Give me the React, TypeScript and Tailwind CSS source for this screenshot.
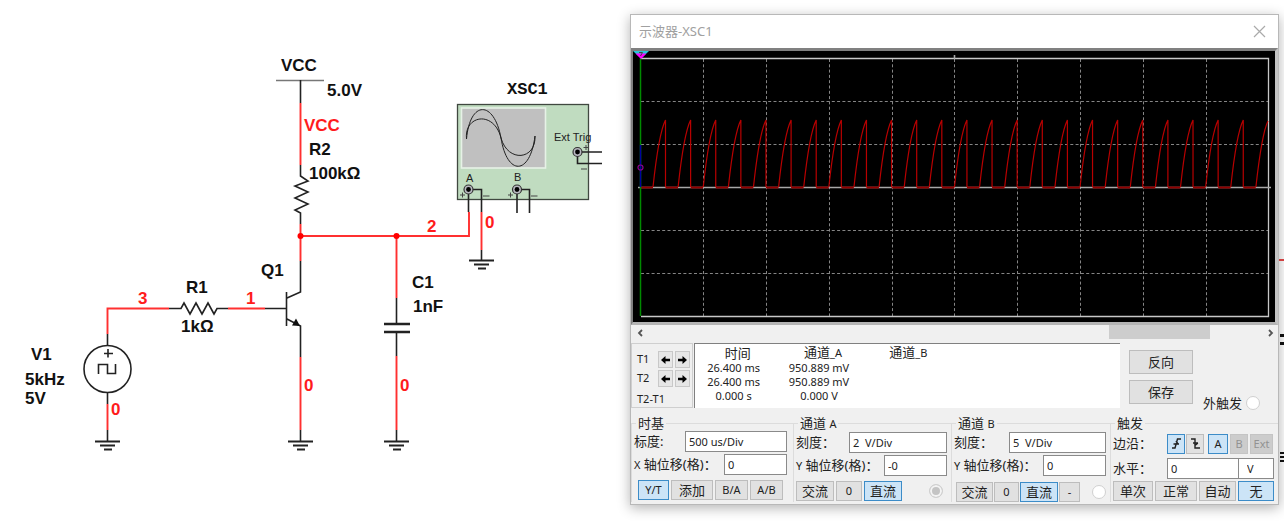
import type { InputHTMLAttributes, ReactNode } from "react";
import clsx from "clsx";

const PULSE_COUNT = 24;
const PULSE_STEP = 25.12;

const readings = [
  { time: "26.400 ms", a: "950.889 mV" },
  { time: "26.400 ms", a: "950.889 mV" },
  { time: "0.000 s", a: "0.000 V" },
];

export default function App() {
  return (
    <main className="grid min-h-screen grid-cols-[630fr_649fr_5px] items-start bg-white">
      <Circuit />
      <Oscilloscope />
      <EdgeMarks />
    </main>
  );
}

function Ground({ x, y }: { x: number; y: number }) {
  return (
    <path
      d={`M${x - 12} ${y}h25M${x - 7} ${y + 4}h15M${x - 3} ${y + 8}h8`}
      stroke="#222"
      strokeWidth="1.8"
    />
  );
}

function Terminal({ x, y }: { x: number; y: number }) {
  return (
    <g>
      <circle cx={x} cy={y} r="4.5" fill="#b8b8c0" stroke="#333" strokeWidth="1.2" />
      <circle cx={x} cy={y} r="2.4" fill="#000" />
    </g>
  );
}

function Circuit() {
  return (
    <svg
      viewBox="0 0 630 521"
      className="h-auto w-full font-['Liberation_Sans',Arial,sans-serif]"
      fill="none"
      role="img"
      aria-label="Circuit"
    >
      {/* wires */}
      <g stroke="#ff3030" strokeWidth="1.9">
        <path d="M107.5 334V308.5H169M228 308.5H265" />
        <path d="M107.5 404V430M300.5 357V430M396.5 356V430" />
        <path d="M300.5 103V165M300.5 224V261M300.5 236H469V212" />
        <path d="M396.5 236V298M481.5 212V250" />
      </g>
      <circle cx="300.5" cy="236" r="3" fill="#f00" />
      <circle cx="396.5" cy="236" r="3" fill="#f00" />

      {/* scope block */}
      <rect x="457.5" y="104.5" width="131" height="95" fill="#c0dcc0" stroke="#404840" strokeWidth="1.3" />
      <rect x="461.5" y="108" width="84" height="60" fill="#c0c0c0" stroke="#e6f2e6" strokeWidth="1.6" />
      <g stroke="#222" strokeWidth="1">
        <path d="M466.5 139C470 100 494 100 501 138C507 176 530 176 535 136" />
        <path d="M466.5 139C464 115 494 110 501 138C508 163 536 160 535 136" />
      </g>

      {/* leads and components */}
      <g stroke="#222" strokeWidth="1.6">
        <path d="M276 80.5H324" stroke="#777" />
        <path d="M300.5 80V103M300.5 165V176L308 181L295 186L308 192L295 198L308 204L295 210L300.5 213V224" />
        <path d="M169 308.5H181L184 303L190 314L196 303L202 314L208 303L214 314L217 308.5H228" />
        <path d="M265 308.5H286M286.5 292V326M287 298L300.5 292V261M287 319L300.5 326V357" />
        <path d="M107.5 334V345M107.5 393V404M107.5 430V441M300.5 430V441M396.5 430V441" />
        <circle cx="107.5" cy="369" r="23.5" />
        <path d="M104 353.5H113M108 349V357.5M98.5 374V364.500H107.500V373.500H115.500V364" />
        <path d="M396.5 298V324M396.5 332V356" />
        <path d="M384 324H410M384 332H410" strokeWidth="2.4" />
        <path d="M468.500 190V212M472 189.500H481.500V212M481.500 250V260" />
        <path d="M517 190V213M520 189.500H529.500V213M577 152H602M577.500 152V163.500H602" />
      </g>
      <path d="M300 326L292 325.500L296 318.500Z" fill="#111" />
      <g stroke="#444" strokeWidth="1">
        <path d="M460 195H465M462.500 192.500V197.500M508 195H513M510.500 192.500V197.500M583.500 147.500H588.500M586 145V150" />
        <path d="M483 196H489.500M531 196H537.500M581 169H587" />
      </g>
      <Terminal x={468.5} y={189.5} />
      <Terminal x={517} y={189.5} />
      <Terminal x={577.5} y={152} />

      <Ground x={107} y={441.5} />
      <Ground x={300} y={441.5} />
      <Ground x={396} y={441.5} />
      <Ground x={481} y={260.5} />

      <g fill="#111" className="text-[17px] font-bold">
        <text x="281" y="71">VCC</text>
        <text x="327" y="96">5.0V</text>
        <text x="309" y="155">R2</text>
        <text x="309" y="179">100kΩ</text>
        <text x="261" y="276">Q1</text>
        <text x="186" y="293">R1</text>
        <text x="181" y="332">1kΩ</text>
        <text x="31" y="360">V1</text>
        <text x="25" y="385">5kHz</text>
        <text x="25" y="404">5V</text>
        <text x="412" y="288">C1</text>
        <text x="413" y="312">1nF</text>
      </g>
      <g fill="#ff1c1c" className="text-[17px] font-bold">
        <text x="304" y="131">VCC</text>
        <text x="427" y="232">2</text>
        <text x="485" y="228">0</text>
        <text x="138" y="304">3</text>
        <text x="246" y="304">1</text>
        <text x="111" y="415">0</text>
        <text x="304" y="391">0</text>
        <text x="400" y="391">0</text>
      </g>
      <text x="507" y="94" fill="#111" className="font-['Liberation_Mono','Courier_New',monospace] text-[17px] font-bold">
        XSC1
      </text>
      <g fill="#222" className="text-[11px]">
        <text x="466" y="182">A</text>
        <text x="514" y="181">B</text>
        <text x="554" y="141">Ext Trig</text>
      </g>
    </svg>
  );
}

function Oscilloscope() {
  return (
    <section
      aria-label="示波器-XSC1"
      className="mt-3.5 min-w-0 border border-[#b8b8b8] bg-[#f0f0f0] font-['Noto_Sans','Noto_Sans_CJK_SC',sans-serif] text-[13px] text-[#222] shadow-[0_3px_12px_rgba(0,0,0,0.3)]"
    >
      <header className="flex h-[33px] items-center justify-between bg-white pr-3 pl-2">
        <h1 className="text-[13px] text-[#a0a0a0]">示波器-XSC1</h1>
        <button type="button" aria-label="关闭">
          <svg width="13" height="13" viewBox="0 0 13 13" stroke="#aaa" strokeWidth="1.2">
            <path d="M1 1L12 12M12 1L1 12" />
          </svg>
        </button>
      </header>
      <Screen />
      <ScrollBar />
      <Readout />
      <Controls />
    </section>
  );
}

function Screen() {
  const starts = Array.from({ length: PULSE_COUNT }, (_, i) => 20 + i * PULSE_STEP);
  const pulses = starts.map((x) => `M${x} 136C${x + 3} 108 ${x + 8} 78 ${x + 12.5} 69V136`).join("");
  const rests = starts.map((x) => `M${x + 12.5} 136.500h12.500`).join("");

  return (
    <div className="border-t-[3px] border-r-[3px] border-b-[3px] border-l-2 border-t-[#808080] border-r-[#c4c4c4] border-b-[#b4b4b4] border-l-[#808080] bg-black">
      <svg viewBox="0 0 642 271" className="block h-auto w-full" fill="none" role="img" aria-label="通道_A">
        <g stroke="#858585" strokeDasharray="3 2.300">
          {[50.5, 93.5, 179.5, 222.5].map((y) => (
            <path key={y} d={`M8 ${y}H635`} />
          ))}
          {[70.5, 133.5, 196.5, 259.5, 321.5, 384.5, 447.5, 510.5, 573.5].map((x) => (
            <path key={x} d={`M${x} 8V265`} />
          ))}
        </g>
        <path d="M8 7.500H635.500V265.500H8" stroke="#c8c8c8" strokeWidth="1.3" />
        <path d="M5 136.500H638M321.500 4V8" stroke="#a8a8a8" strokeWidth="1.6" />
        <path d="M7.500 136.500H20" stroke="#900000" strokeWidth="2" />
        <path d={rests} stroke="#900000" strokeWidth="2" />
        <path d={pulses} stroke="#b80000" strokeWidth="1.2" />
        <path d="M622.900 136C626 108 631 78 635 70" stroke="#b80000" strokeWidth="1.2" />
        <path d="M7.500 7V265" stroke="#008a00" strokeWidth="1.5" />
        <path d="M7.500 94V136" stroke="#0000a0" strokeWidth="1.5" />
        <circle cx="7.5" cy="116.500" r="2.500" stroke="#900090" strokeWidth="1.2" />
        <path d="M0 0H16L8 7.500Z" fill="#28c8d8" />
        <path d="M2.500 2.500H13.500L8 8Z" fill="#f0f" />
        <path d="M6 1.500H9.500L7.500 5" stroke="#444" />
      </svg>
    </div>
  );
}

function ScrollBar() {
  return (
    <div className="flex h-4 items-center justify-between pr-1 pl-1.5">
      <button type="button" aria-label="向左">
        <Chevron d="M5 1L2 4L5 7" />
      </button>
      <div className="grid h-full grow grid-cols-[463fr_100fr_57fr]">
        <div className="col-start-2 mb-0.5 bg-[#cdcdcd]" />
      </div>
      <button type="button" aria-label="向右">
        <Chevron d="M2 1L5 4L2 7" />
      </button>
    </div>
  );
}

function Chevron({ d }: { d: string }) {
  return (
    <svg width="7" height="8" viewBox="0 0 7 8" fill="none" stroke="#555" strokeWidth="1.8">
      <path d={d} />
    </svg>
  );
}

function ArrowButton({ label, flip }: { label: string; flip?: boolean }) {
  return (
    <button
      type="button"
      aria-label={label}
      className="flex h-[17px] w-[15px] items-center justify-center border border-[#c8c8c8] bg-[#e6e6e6]"
    >
      <svg width="9" height="8" viewBox="0 0 9 8" fill="#000" className={clsx(flip && "-scale-x-100")}>
        <path d="M0 4L4.500 0V2.800H9V5.200H4.500V8Z" />
      </svg>
    </button>
  );
}

function Readout() {
  return (
    <div className="flex h-[69px] items-start pt-0.5 text-[11px]">
      <div className="mr-px flex h-[65px] w-[62px] flex-col border border-[#cfcfcf] pt-[7px] pl-[5px]">
        {["T1", "T2"].map((name) => (
          <div key={name} className="mb-0.5 flex gap-0.5">
            <span className="w-[19px] leading-4">{name}</span>
            <ArrowButton label={`${name} 向左`} />
            <ArrowButton label={`${name} 向右`} flip />
          </div>
        ))}
        <span className="leading-5">T2-T1</span>
      </div>
      <div className="h-[65px] min-w-0 grow border-t border-l border-[#808080] bg-white">
        <table className="w-[256px] table-fixed text-center">
          <thead>
            <tr className="h-4 text-[13px] leading-4">
              <th className="p-0 font-normal">时间</th>
              <th className="p-0 font-normal">
                通道<span className="text-[11px]">_A</span>
              </th>
              <th className="p-0 font-normal">
                通道<span className="text-[11px]">_B</span>
              </th>
            </tr>
          </thead>
          <tbody>
            {readings.map((row, i) => (
              <tr key={i} className="h-3.5 leading-[14px]">
                <td className="p-0 pr-2">{row.time}</td>
                <td className="p-0 pr-2">{row.a}</td>
                <td className="p-0" />
              </tr>
            ))}
          </tbody>
        </table>
      </div>
      <div className="ml-[9px] flex w-[64px] flex-col gap-1.5 pt-[7px]">
        <Button className="h-6 w-full">反向</Button>
        <Button className="h-6 w-full">保存</Button>
      </div>
      <label className="mr-[18px] ml-2.5 flex items-center gap-1 self-end text-[13px] leading-none whitespace-nowrap">
        外触发
        <Radio />
      </label>
    </div>
  );
}

function Controls() {
  return (
    <div className="grid grid-cols-[162fr_158fr_159fr_168fr] pt-[5px] pb-0.5">
      <Group title="时基" className="pr-1.5">
        <Field label="标度:" defaultValue="500 us/Div" className="w-[102px]" />
        <Field label={<Offset axis="X" />} defaultValue="0" className="w-[63px]" />
        <div className="mt-[3px] flex gap-0.5 pl-1">
          <Button active className="w-[31px]">Y/T</Button>
          <Button className="w-[42px]">添加</Button>
          <Button className="w-[33px]">B/A</Button>
          <Button className="w-[33px]">A/B</Button>
        </div>
      </Group>
      <Group title={<>通道 <Small>A</Small></>} className="pr-1">
        <Field label="刻度：" defaultValue="2  V/Div" className="w-[98px]" />
        <Field label={<Offset axis="Y" />} defaultValue="-0" className="w-[63px]" />
        <div className="mt-[3px] flex items-center gap-0.5">
          <Button className="w-[38px]">交流</Button>
          <Button className="w-[26px]">0</Button>
          <Button active className="w-[38px]">直流</Button>
          <Radio label="通道 A" disabled className="mr-1 ml-auto" />
        </div>
      </Group>
      <Group title={<>通道 <Small>B</Small></>} className="pr-1">
        <Field label="刻度：" defaultValue="5  V/Div" className="w-[97px]" />
        <Field label={<Offset axis="Y" />} defaultValue="0" className="w-[63px]" />
        <div className="mt-1 flex items-center gap-px pl-0.5">
          <Button className="w-[37px]">交流</Button>
          <Button className="w-[25px]">0</Button>
          <Button active className="w-[38px]">直流</Button>
          <Button className="w-[21px]">-</Button>
          <Radio label="通道 B" className="ml-auto" />
        </div>
      </Group>
      <Group title="触发" className="pr-1">
        <div className="flex h-[25px] items-center">
          <span className="w-[54px] shrink-0 whitespace-nowrap">边沿：</span>
          <Button active label="上升沿" className="w-[18px]">
            <EdgeIcon d="M1 11H4L6.500 2H10M2.500 7H8M5 4L7 7" />
          </Button>
          <Button label="下降沿" className="ml-px w-[18px]">
            <EdgeIcon d="M1 2H5V11H10M3 6H8M5 8.500L8 6" />
          </Button>
          <Button active className="ml-1 w-5">A</Button>
          <Button disabled className="ml-0.5 w-[18px]">B</Button>
          <Button disabled className="ml-0.5 w-[23px]">Ext</Button>
        </div>
        <div className="flex items-center">
          <label htmlFor="level" className="w-[54px] shrink-0 whitespace-nowrap">
            水平：
          </label>
          <TextBox id="level" defaultValue="0" className="w-0 min-w-0 grow" />
          <TextBox aria-label="单位" defaultValue="V" className="-ml-px w-9 shrink-0 pl-2" />
        </div>
        <div className="flex justify-between">
          <Button className="w-10">单次</Button>
          <Button className="w-[42px]">正常</Button>
          <Button className="w-[37px]">自动</Button>
          <Button active className="w-9">无</Button>
        </div>
      </Group>
    </div>
  );
}

function Small({ children }: { children: ReactNode }) {
  return <span className="text-[11px]">{children}</span>;
}

function Offset({ axis }: { axis: string }) {
  return (
    <>
      <Small>{axis}</Small> 轴位移(格)：
    </>
  );
}

function Group({ title, className, children }: { title: ReactNode; className?: string; children: ReactNode }) {
  return (
    <fieldset className={clsx("min-w-0 border-t border-l border-[#dcdcdc] pl-0.5", className)}>
      <legend className="ml-0.5 px-0.5 leading-4">{title}</legend>
      <div className="flex flex-col gap-0.5">{children}</div>
    </fieldset>
  );
}

function TextBox({ className, ...props }: InputHTMLAttributes<HTMLInputElement>) {
  return (
    <input
      type="text"
      className={clsx("h-[21px] border border-[#8a8a8a] bg-white px-[3px] text-[11px] whitespace-pre", className)}
      {...props}
    />
  );
}

function Field({ label, defaultValue, className }: { label: ReactNode; defaultValue: string; className: string }) {
  return (
    <label className="flex items-center justify-between">
      <span className="w-0 whitespace-nowrap">{label}</span>
      <TextBox defaultValue={defaultValue} className={className} />
    </label>
  );
}

function Radio({ label, disabled, className }: { label?: string; disabled?: boolean; className?: string }) {
  return (
    <input
      type="radio"
      aria-label={label}
      disabled={disabled}
      className={clsx(
        "size-3.5 shrink-0 appearance-none rounded-full border border-[#d0d0d0]",
        disabled ? "bg-[#c4c4c4] shadow-[inset_0_0_0_2px_#f4f4f4]" : "bg-white",
        className,
      )}
    />
  );
}

function Button({
  active,
  disabled,
  label,
  className,
  children,
}: {
  active?: boolean;
  disabled?: boolean;
  label?: string;
  className?: string;
  children: ReactNode;
}) {
  const latin = typeof children === "string" && /^[\x20-\x7e]+$/.test(children);
  return (
    <button
      type="button"
      aria-label={label}
      disabled={disabled}
      className={clsx(
        "flex min-h-5 items-center justify-center border leading-[18px] whitespace-nowrap",
        latin ? "text-[11px]" : "text-[13px]",
        active && "border-[#3c8cc8] bg-[#cce4f7]",
        disabled && "border-[#c4c4c4] bg-[#cccccc] text-[#929292]",
        !active && !disabled && "border-[#bdbdbd] bg-[#e1e1e1]",
        className,
      )}
    >
      {children}
    </button>
  );
}

function EdgeIcon({ d }: { d: string }) {
  return (
    <svg width="11" height="13" viewBox="0 0 11 13" fill="none" stroke="#222" strokeWidth="1.4">
      <path d={d} />
    </svg>
  );
}

// slivers of the schematic that show past the window's right edge
function EdgeMarks() {
  return (
    <svg viewBox="0 0 5 521" className="h-auto w-full">
      <path d="M0 259H5V261H0Z" fill="#d04040" />
      <path d="M1 334H5V337H1ZM1 342H5V345H1ZM1 452H5V454H1ZM1 456H5V458H1ZM1 460H5V462H1Z" fill="#111" />
    </svg>
  );
}
